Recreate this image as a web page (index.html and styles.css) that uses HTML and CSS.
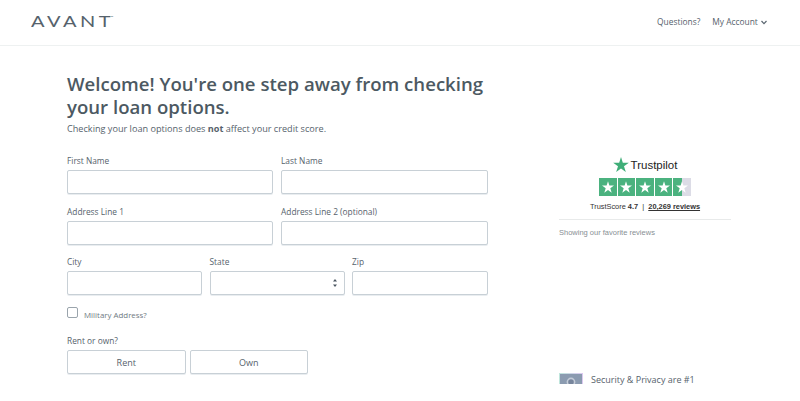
FILE: index.html
```html
<!DOCTYPE html>
<html lang="en">
<head>
    <meta charset="UTF-8">
    <meta name="viewport" content="width=device-width, initial-scale=1.0">
    <title>Avant - Check your loan options</title>
    <link rel="stylesheet" href="styles.css">
</head>
<body>

<header class="top-bar">
    <span class="logo"><span class="logo-letters">AVAN</span>T<sup class="logo-mark">&trade;</sup></span>
    <nav class="top-nav">
        <a href="#">Questions?</a>
        <a href="#" class="account-link">My Account
            <svg class="chevron" width="6" height="5" viewBox="0 0 6 5"><path d="M0.5 1 3 3.6 5.5 1" fill="none" stroke="#5a6670" stroke-width="1.2"/></svg>
        </a>
    </nav>
</header>

<main class="page">
    <section class="form-column">
        <h1>Welcome! You're one step away from checking your loan options.</h1>
        <p class="subtitle">Checking your loan options does <strong>not</strong> affect your credit score.</p>

        <form>
            <div class="row row-two">
                <div class="field">
                    <label for="first">First Name</label>
                    <input type="text" id="first">
                </div>
                <div class="field">
                    <label for="last">Last Name</label>
                    <input type="text" id="last">
                </div>
            </div>
            <div class="row row-two row-tight">
                <div class="field">
                    <label for="addr1">Address Line 1</label>
                    <input type="text" id="addr1">
                </div>
                <div class="field">
                    <label for="addr2">Address Line 2 (optional)</label>
                    <input type="text" id="addr2">
                </div>
            </div>
            <div class="row row-three">
                <div class="field">
                    <label for="city">City</label>
                    <input type="text" id="city">
                </div>
                <div class="field">
                    <label for="state">State</label>
                    <div class="select-box" id="state">
                        <svg width="6" height="10" viewBox="0 0 6 10"><path d="M3 1 5 3.5H1ZM3 9 1 6.5H5Z" fill="#4a5560"/></svg>
                    </div>
                </div>
                <div class="field">
                    <label for="zip">Zip</label>
                    <input type="text" id="zip">
                </div>
            </div>

            <div class="military">
                <span class="checkbox"></span>
                <span class="military-text">Military Address?</span>
            </div>

            <p class="rent-label">Rent or own?</p>
            <div class="rent-buttons">
                <button type="button">Rent</button>
                <button type="button">Own</button>
            </div>
        </form>
    </section>

    <aside class="side-column">
        <div class="trust-logo">
            <svg width="16" height="15" viewBox="0 0 24 23"><path d="M12 0 14.8 8.7H24L16.6 14.1 19.4 23 12 17.5 4.6 23 7.4 14.1 0 8.7H9.2Z" fill="#3fae78"/></svg>
            <span>Trustpilot</span>
        </div>
        <div class="stars">
            <span class="star-box"><svg width="12" height="12" viewBox="0 0 24 23"><path d="M12 0 14.8 8.7H24L16.6 14.1 19.4 23 12 17.5 4.6 23 7.4 14.1 0 8.7H9.2Z" fill="#fff"/></svg></span>
            <span class="star-box"><svg width="12" height="12" viewBox="0 0 24 23"><path d="M12 0 14.8 8.7H24L16.6 14.1 19.4 23 12 17.5 4.6 23 7.4 14.1 0 8.7H9.2Z" fill="#fff"/></svg></span>
            <span class="star-box"><svg width="12" height="12" viewBox="0 0 24 23"><path d="M12 0 14.8 8.7H24L16.6 14.1 19.4 23 12 17.5 4.6 23 7.4 14.1 0 8.7H9.2Z" fill="#fff"/></svg></span>
            <span class="star-box"><svg width="12" height="12" viewBox="0 0 24 23"><path d="M12 0 14.8 8.7H24L16.6 14.1 19.4 23 12 17.5 4.6 23 7.4 14.1 0 8.7H9.2Z" fill="#fff"/></svg></span>
            <span class="star-box star-part"><svg width="12" height="12" viewBox="0 0 24 23"><path d="M12 0 14.8 8.7H24L16.6 14.1 19.4 23 12 17.5 4.6 23 7.4 14.1 0 8.7H9.2Z" fill="#fff"/></svg></span>
        </div>
        <p class="trust-score">TrustScore <b>4.7</b> &nbsp;|&nbsp; <a href="#">20,269 reviews</a></p>
        <p class="showing">Showing our favorite reviews</p>

        <div class="security">
            <div class="security-icon">
                <svg width="22" height="10" viewBox="0 0 22 10"><circle cx="11" cy="8" r="3.6" fill="#77859c" stroke="#c4ccd8" stroke-width="1.6"/></svg>
            </div>
            <span>Security &amp; Privacy are #1</span>
        </div>
    </aside>
</main>

</body>
</html>
```

FILE: styles.css
```css
html, body {
    height: 100%;
    overflow: hidden;
}
body {
    font-family: "Open Sans", Arial, sans-serif;
    background-color: white;
    color: #56626c;
    margin: 0;
    padding: 0;
}
.top-bar {
    height: 45px;
    border-bottom: 1px solid #eef1f1;
    display: flex;
    align-items: center;
    justify-content: space-between;
    padding: 0 33px 0 31px;
}
.logo {
    font-family: "Lato", sans-serif;
    font-size: 16px;
    color: #56626c;
    margin-top: -4px;
    transform: scaleX(1.25);
    transform-origin: left center;
}
.logo-letters {
    letter-spacing: 2.8px;
}
.logo-mark {
    font-size: 3px;
    vertical-align: 9px;
}
.top-nav {
    display: flex;
    gap: 12px;
    margin-top: -3px;
}
.top-nav a {
    color: #56626c;
    text-decoration: none;
    font-size: 8.4px;
}
.chevron {
    margin-left: 1px;
}
.page {
    display: flex;
    padding: 27px 0 0 67px;
}
.form-column {
    width: 421px;
}
h1 {
    font-family: "Open Sans", Arial, sans-serif;
    font-size: 18.6px;
    font-weight: 600;
    line-height: 22.5px;
    color: #4c5962;
    margin: 0;
}
.subtitle {
    font-size: 9.15px;
    line-height: 14px;
    margin: 4px 0 19px;
}
.row {
    display: grid;
    gap: 8px;
    margin-bottom: 12px;
}
.row-tight {
    margin-bottom: 11px;
}
.row-two {
    grid-template-columns: 206px 207px;
}
.row-three {
    grid-template-columns: 135px 135px 136px;
    gap: 8px 7.5px;
}
.field label {
    display: block;
    font-size: 8.35px;
    line-height: 12px;
    margin-bottom: 3px;
}
.field input, .select-box {
    display: flex;
    align-items: center;
    justify-content: flex-end;
    box-sizing: border-box;
    width: 100%;
    height: 24px;
    padding: 0 6px;
    background-color: white;
    border: 1px solid #c8d0d6;
    border-radius: 2px;
    box-shadow: 0 1px 0 #e9edf0;
}
.military {
    display: flex;
    align-items: flex-start;
    gap: 6px;
    font-size: 7.9px;
    color: #6f7a83;
    margin-top: 3px;
}
.military-text {
    margin-top: 3px;
}
.checkbox {
    box-sizing: border-box;
    width: 11px;
    height: 11px;
    border: 1px solid #9aa4ac;
    border-radius: 2px;
}
.rent-label {
    font-size: 8.35px;
    line-height: 12px;
    margin: 15px 0 3px;
}
.rent-buttons {
    display: flex;
    gap: 4px;
}
.rent-buttons button {
    width: 118.5px;
    height: 24px;
    background-color: white;
    color: #56626c;
    border: 1px solid #c8d0d6;
    border-radius: 2px;
    box-shadow: 0 1px 0 #e9edf0;
    font-family: "Open Sans", Arial, sans-serif;
    font-size: 9px;
}
.side-column {
    width: 172px;
    margin: 84px 0 0 71px;
}
.trust-logo {
    display: flex;
    align-items: center;
    justify-content: center;
    gap: 2px;
    font-family: "Liberation Sans", Arial, sans-serif;
    font-size: 11.5px;
    color: #222;
}
.stars {
    display: flex;
    justify-content: center;
    gap: 1px;
    margin-top: 6px;
}
.star-box {
    display: flex;
    align-items: center;
    justify-content: center;
    width: 17.6px;
    height: 18px;
    background-color: #4bb27f;
}
.star-part {
    background: linear-gradient(90deg, #4bb27f 50%, #dcdce6 50%);
}
.trust-score {
    font-family: "Liberation Sans", Arial, sans-serif;
    font-size: 7.4px;
    line-height: 10px;
    color: #333;
    text-align: center;
    margin: 6px 0 8px;
    padding-bottom: 7px;
    border-bottom: 1px solid #e8eaea;
}
.trust-score a {
    color: #333;
    font-weight: bold;
}
.showing {
    font-family: "Liberation Sans", Arial, sans-serif;
    font-size: 7.5px;
    color: #888f94;
    margin: 0;
}
.security {
    display: flex;
    gap: 8px;
    align-items: flex-start;
    font-size: 9px;
    margin-top: 136px;
}
.security-icon {
    box-sizing: border-box;
    width: 24px;
    height: 11px;
    background-color: #8b9bb0;
    border: 1px solid;
    border-bottom: 0;
    border-image: linear-gradient(90deg, #bfe6dc, #dcc8f0) 1;
    flex-shrink: 0;
}
```
